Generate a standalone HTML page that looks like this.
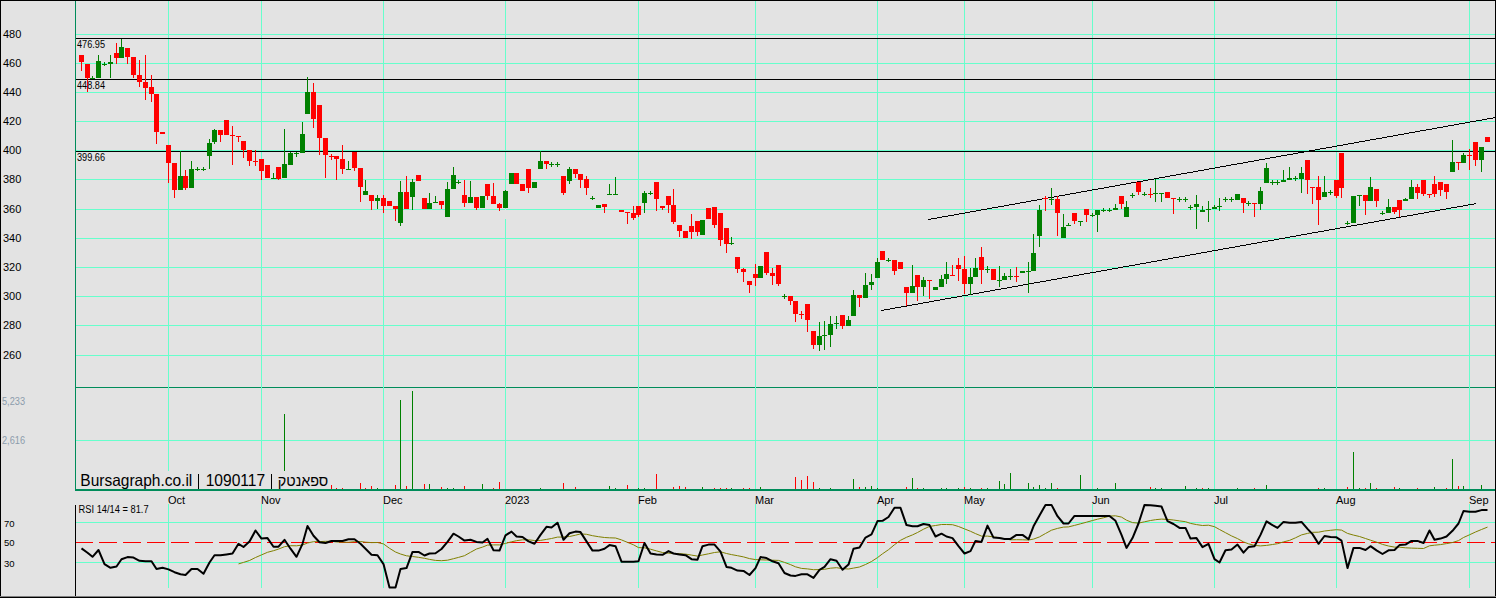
<!DOCTYPE html>
<html><head><meta charset="utf-8"><style>
html,body{margin:0;padding:0;background:#e3e3e3;overflow:hidden;}
svg{display:block;}
text{shape-rendering:auto;}
polyline,line{shape-rendering:auto;}
</style></head><body><svg width="1496" height="598" viewBox="0 0 1496 598" font-family='"Liberation Sans", sans-serif' shape-rendering="crispEdges"><rect x="0" y="0" width="1496" height="598" fill="#e3e3e3"/><rect x="75" y="387" width="1420" height="1" fill="#008c5a"/><rect x="168" y="1" width="1" height="489" fill="#66ffcc"/><rect x="168" y="504" width="1" height="84" fill="#66ffcc"/><rect x="261" y="1" width="1" height="489" fill="#66ffcc"/><rect x="261" y="504" width="1" height="84" fill="#66ffcc"/><rect x="383" y="1" width="1" height="489" fill="#66ffcc"/><rect x="383" y="504" width="1" height="84" fill="#66ffcc"/><rect x="505" y="1" width="1" height="208" fill="#66ffcc"/><rect x="505" y="219" width="1" height="271" fill="#66ffcc"/><rect x="505" y="504" width="1" height="84" fill="#66ffcc"/><rect x="638" y="1" width="1" height="489" fill="#66ffcc"/><rect x="638" y="504" width="1" height="84" fill="#66ffcc"/><rect x="755" y="1" width="1" height="489" fill="#66ffcc"/><rect x="755" y="504" width="1" height="84" fill="#66ffcc"/><rect x="877" y="1" width="1" height="489" fill="#66ffcc"/><rect x="877" y="504" width="1" height="84" fill="#66ffcc"/><rect x="964" y="1" width="1" height="489" fill="#66ffcc"/><rect x="964" y="504" width="1" height="84" fill="#66ffcc"/><rect x="1092" y="1" width="1" height="489" fill="#66ffcc"/><rect x="1092" y="504" width="1" height="84" fill="#66ffcc"/><rect x="1214" y="1" width="1" height="489" fill="#66ffcc"/><rect x="1214" y="504" width="1" height="84" fill="#66ffcc"/><rect x="1336" y="1" width="1" height="489" fill="#66ffcc"/><rect x="1336" y="504" width="1" height="84" fill="#66ffcc"/><rect x="1469" y="1" width="1" height="489" fill="#66ffcc"/><rect x="1469" y="504" width="1" height="84" fill="#66ffcc"/><rect x="76" y="34" width="1419" height="1" fill="#66ffcc"/><rect x="76" y="63" width="1419" height="1" fill="#66ffcc"/><rect x="76" y="92" width="1419" height="1" fill="#66ffcc"/><rect x="76" y="121" width="1419" height="1" fill="#66ffcc"/><rect x="76" y="150" width="1419" height="1" fill="#66ffcc"/><rect x="76" y="179" width="1419" height="1" fill="#66ffcc"/><rect x="76" y="209" width="429" height="1" fill="#66ffcc"/><rect x="506" y="209" width="989" height="1" fill="#66ffcc"/><rect x="76" y="238" width="1419" height="1" fill="#66ffcc"/><rect x="76" y="267" width="1419" height="1" fill="#66ffcc"/><rect x="76" y="296" width="1419" height="1" fill="#66ffcc"/><rect x="76" y="325" width="1419" height="1" fill="#66ffcc"/><rect x="76" y="355" width="1419" height="1" fill="#66ffcc"/><rect x="76" y="440" width="1419" height="1" fill="#66ffcc"/><rect x="76" y="522" width="1419" height="1" fill="#66ffcc"/><rect x="76" y="562" width="1419" height="1" fill="#66ffcc"/><rect x="75" y="542" width="18" height="1" fill="#ff0000"/><rect x="99" y="542" width="18" height="1" fill="#ff0000"/><rect x="123" y="542" width="18" height="1" fill="#ff0000"/><rect x="147" y="542" width="18" height="1" fill="#ff0000"/><rect x="171" y="542" width="18" height="1" fill="#ff0000"/><rect x="195" y="542" width="18" height="1" fill="#ff0000"/><rect x="219" y="542" width="18" height="1" fill="#ff0000"/><rect x="243" y="542" width="18" height="1" fill="#ff0000"/><rect x="267" y="542" width="18" height="1" fill="#ff0000"/><rect x="291" y="542" width="18" height="1" fill="#ff0000"/><rect x="315" y="542" width="18" height="1" fill="#ff0000"/><rect x="339" y="542" width="18" height="1" fill="#ff0000"/><rect x="363" y="542" width="18" height="1" fill="#ff0000"/><rect x="387" y="542" width="18" height="1" fill="#ff0000"/><rect x="411" y="542" width="18" height="1" fill="#ff0000"/><rect x="435" y="542" width="18" height="1" fill="#ff0000"/><rect x="459" y="542" width="18" height="1" fill="#ff0000"/><rect x="483" y="542" width="18" height="1" fill="#ff0000"/><rect x="507" y="542" width="18" height="1" fill="#ff0000"/><rect x="531" y="542" width="18" height="1" fill="#ff0000"/><rect x="555" y="542" width="18" height="1" fill="#ff0000"/><rect x="579" y="542" width="18" height="1" fill="#ff0000"/><rect x="603" y="542" width="18" height="1" fill="#ff0000"/><rect x="627" y="542" width="18" height="1" fill="#ff0000"/><rect x="651" y="542" width="18" height="1" fill="#ff0000"/><rect x="675" y="542" width="18" height="1" fill="#ff0000"/><rect x="699" y="542" width="18" height="1" fill="#ff0000"/><rect x="723" y="542" width="18" height="1" fill="#ff0000"/><rect x="747" y="542" width="18" height="1" fill="#ff0000"/><rect x="771" y="542" width="18" height="1" fill="#ff0000"/><rect x="795" y="542" width="18" height="1" fill="#ff0000"/><rect x="819" y="542" width="18" height="1" fill="#ff0000"/><rect x="843" y="542" width="18" height="1" fill="#ff0000"/><rect x="867" y="542" width="18" height="1" fill="#ff0000"/><rect x="891" y="542" width="18" height="1" fill="#ff0000"/><rect x="915" y="542" width="18" height="1" fill="#ff0000"/><rect x="939" y="542" width="18" height="1" fill="#ff0000"/><rect x="963" y="542" width="18" height="1" fill="#ff0000"/><rect x="987" y="542" width="18" height="1" fill="#ff0000"/><rect x="1011" y="542" width="18" height="1" fill="#ff0000"/><rect x="1035" y="542" width="18" height="1" fill="#ff0000"/><rect x="1059" y="542" width="18" height="1" fill="#ff0000"/><rect x="1083" y="542" width="18" height="1" fill="#ff0000"/><rect x="1107" y="542" width="18" height="1" fill="#ff0000"/><rect x="1131" y="542" width="18" height="1" fill="#ff0000"/><rect x="1155" y="542" width="18" height="1" fill="#ff0000"/><rect x="1179" y="542" width="18" height="1" fill="#ff0000"/><rect x="1203" y="542" width="18" height="1" fill="#ff0000"/><rect x="1227" y="542" width="18" height="1" fill="#ff0000"/><rect x="1251" y="542" width="18" height="1" fill="#ff0000"/><rect x="1275" y="542" width="18" height="1" fill="#ff0000"/><rect x="1299" y="542" width="18" height="1" fill="#ff0000"/><rect x="1323" y="542" width="18" height="1" fill="#ff0000"/><rect x="1347" y="542" width="18" height="1" fill="#ff0000"/><rect x="1371" y="542" width="18" height="1" fill="#ff0000"/><rect x="1395" y="542" width="18" height="1" fill="#ff0000"/><rect x="1419" y="542" width="18" height="1" fill="#ff0000"/><rect x="1443" y="542" width="18" height="1" fill="#ff0000"/><rect x="1467" y="542" width="18" height="1" fill="#ff0000"/><rect x="1491" y="542" width="4" height="1" fill="#ff0000"/><rect x="76" y="38" width="1419" height="1" fill="#000"/><rect x="76" y="79" width="1419" height="1" fill="#000"/><rect x="76" y="151" width="1419" height="1" fill="#000"/><rect x="928" y="219" width="3" height="1" fill="#000"/><rect x="931" y="218" width="6" height="1" fill="#000"/><rect x="937" y="217" width="5" height="1" fill="#000"/><rect x="942" y="216" width="6" height="1" fill="#000"/><rect x="948" y="215" width="6" height="1" fill="#000"/><rect x="954" y="214" width="5" height="1" fill="#000"/><rect x="959" y="213" width="6" height="1" fill="#000"/><rect x="965" y="212" width="5" height="1" fill="#000"/><rect x="970" y="211" width="6" height="1" fill="#000"/><rect x="976" y="210" width="5" height="1" fill="#000"/><rect x="981" y="209" width="6" height="1" fill="#000"/><rect x="987" y="208" width="5" height="1" fill="#000"/><rect x="992" y="207" width="6" height="1" fill="#000"/><rect x="998" y="206" width="6" height="1" fill="#000"/><rect x="1004" y="205" width="5" height="1" fill="#000"/><rect x="1009" y="204" width="6" height="1" fill="#000"/><rect x="1015" y="203" width="5" height="1" fill="#000"/><rect x="1020" y="202" width="6" height="1" fill="#000"/><rect x="1026" y="201" width="5" height="1" fill="#000"/><rect x="1031" y="200" width="6" height="1" fill="#000"/><rect x="1037" y="199" width="5" height="1" fill="#000"/><rect x="1042" y="198" width="6" height="1" fill="#000"/><rect x="1048" y="197" width="6" height="1" fill="#000"/><rect x="1054" y="196" width="5" height="1" fill="#000"/><rect x="1059" y="195" width="6" height="1" fill="#000"/><rect x="1065" y="194" width="5" height="1" fill="#000"/><rect x="1070" y="193" width="6" height="1" fill="#000"/><rect x="1076" y="192" width="5" height="1" fill="#000"/><rect x="1081" y="191" width="6" height="1" fill="#000"/><rect x="1087" y="190" width="5" height="1" fill="#000"/><rect x="1092" y="189" width="6" height="1" fill="#000"/><rect x="1098" y="188" width="6" height="1" fill="#000"/><rect x="1104" y="187" width="5" height="1" fill="#000"/><rect x="1109" y="186" width="6" height="1" fill="#000"/><rect x="1115" y="185" width="5" height="1" fill="#000"/><rect x="1120" y="184" width="6" height="1" fill="#000"/><rect x="1126" y="183" width="5" height="1" fill="#000"/><rect x="1131" y="182" width="6" height="1" fill="#000"/><rect x="1137" y="181" width="6" height="1" fill="#000"/><rect x="1143" y="180" width="5" height="1" fill="#000"/><rect x="1148" y="179" width="6" height="1" fill="#000"/><rect x="1154" y="178" width="5" height="1" fill="#000"/><rect x="1159" y="177" width="6" height="1" fill="#000"/><rect x="1165" y="176" width="5" height="1" fill="#000"/><rect x="1170" y="175" width="6" height="1" fill="#000"/><rect x="1176" y="174" width="5" height="1" fill="#000"/><rect x="1181" y="173" width="6" height="1" fill="#000"/><rect x="1187" y="172" width="6" height="1" fill="#000"/><rect x="1193" y="171" width="5" height="1" fill="#000"/><rect x="1198" y="170" width="6" height="1" fill="#000"/><rect x="1204" y="169" width="5" height="1" fill="#000"/><rect x="1209" y="168" width="6" height="1" fill="#000"/><rect x="1215" y="167" width="5" height="1" fill="#000"/><rect x="1220" y="166" width="6" height="1" fill="#000"/><rect x="1226" y="165" width="5" height="1" fill="#000"/><rect x="1231" y="164" width="6" height="1" fill="#000"/><rect x="1237" y="163" width="6" height="1" fill="#000"/><rect x="1243" y="162" width="5" height="1" fill="#000"/><rect x="1248" y="161" width="6" height="1" fill="#000"/><rect x="1254" y="160" width="5" height="1" fill="#000"/><rect x="1259" y="159" width="6" height="1" fill="#000"/><rect x="1265" y="158" width="5" height="1" fill="#000"/><rect x="1270" y="157" width="6" height="1" fill="#000"/><rect x="1276" y="156" width="5" height="1" fill="#000"/><rect x="1281" y="155" width="6" height="1" fill="#000"/><rect x="1287" y="154" width="6" height="1" fill="#000"/><rect x="1293" y="153" width="5" height="1" fill="#000"/><rect x="1298" y="152" width="6" height="1" fill="#000"/><rect x="1304" y="151" width="5" height="1" fill="#000"/><rect x="1309" y="150" width="6" height="1" fill="#000"/><rect x="1315" y="149" width="5" height="1" fill="#000"/><rect x="1320" y="148" width="6" height="1" fill="#000"/><rect x="1326" y="147" width="6" height="1" fill="#000"/><rect x="1332" y="146" width="5" height="1" fill="#000"/><rect x="1337" y="145" width="6" height="1" fill="#000"/><rect x="1343" y="144" width="5" height="1" fill="#000"/><rect x="1348" y="143" width="6" height="1" fill="#000"/><rect x="1354" y="142" width="5" height="1" fill="#000"/><rect x="1359" y="141" width="6" height="1" fill="#000"/><rect x="1365" y="140" width="5" height="1" fill="#000"/><rect x="1370" y="139" width="6" height="1" fill="#000"/><rect x="1376" y="138" width="6" height="1" fill="#000"/><rect x="1382" y="137" width="5" height="1" fill="#000"/><rect x="1387" y="136" width="6" height="1" fill="#000"/><rect x="1393" y="135" width="5" height="1" fill="#000"/><rect x="1398" y="134" width="6" height="1" fill="#000"/><rect x="1404" y="133" width="5" height="1" fill="#000"/><rect x="1409" y="132" width="6" height="1" fill="#000"/><rect x="1415" y="131" width="5" height="1" fill="#000"/><rect x="1420" y="130" width="6" height="1" fill="#000"/><rect x="1426" y="129" width="6" height="1" fill="#000"/><rect x="1432" y="128" width="5" height="1" fill="#000"/><rect x="1437" y="127" width="6" height="1" fill="#000"/><rect x="1443" y="126" width="5" height="1" fill="#000"/><rect x="1448" y="125" width="6" height="1" fill="#000"/><rect x="1454" y="124" width="5" height="1" fill="#000"/><rect x="1459" y="123" width="6" height="1" fill="#000"/><rect x="1465" y="122" width="5" height="1" fill="#000"/><rect x="1470" y="121" width="6" height="1" fill="#000"/><rect x="1476" y="120" width="6" height="1" fill="#000"/><rect x="1482" y="119" width="5" height="1" fill="#000"/><rect x="1487" y="118" width="6" height="1" fill="#000"/><rect x="1493" y="117" width="2" height="1" fill="#000"/><rect x="881" y="310" width="3" height="1" fill="#000"/><rect x="884" y="309" width="6" height="1" fill="#000"/><rect x="890" y="308" width="5" height="1" fill="#000"/><rect x="895" y="307" width="6" height="1" fill="#000"/><rect x="901" y="306" width="6" height="1" fill="#000"/><rect x="907" y="305" width="5" height="1" fill="#000"/><rect x="912" y="304" width="6" height="1" fill="#000"/><rect x="918" y="303" width="5" height="1" fill="#000"/><rect x="923" y="302" width="6" height="1" fill="#000"/><rect x="929" y="301" width="5" height="1" fill="#000"/><rect x="934" y="300" width="6" height="1" fill="#000"/><rect x="940" y="299" width="5" height="1" fill="#000"/><rect x="945" y="298" width="6" height="1" fill="#000"/><rect x="951" y="297" width="6" height="1" fill="#000"/><rect x="957" y="296" width="5" height="1" fill="#000"/><rect x="962" y="295" width="6" height="1" fill="#000"/><rect x="968" y="294" width="5" height="1" fill="#000"/><rect x="973" y="293" width="6" height="1" fill="#000"/><rect x="979" y="292" width="5" height="1" fill="#000"/><rect x="984" y="291" width="6" height="1" fill="#000"/><rect x="990" y="290" width="5" height="1" fill="#000"/><rect x="995" y="289" width="6" height="1" fill="#000"/><rect x="1001" y="288" width="6" height="1" fill="#000"/><rect x="1007" y="287" width="5" height="1" fill="#000"/><rect x="1012" y="286" width="6" height="1" fill="#000"/><rect x="1018" y="285" width="5" height="1" fill="#000"/><rect x="1023" y="284" width="6" height="1" fill="#000"/><rect x="1029" y="283" width="5" height="1" fill="#000"/><rect x="1034" y="282" width="6" height="1" fill="#000"/><rect x="1040" y="281" width="6" height="1" fill="#000"/><rect x="1046" y="280" width="5" height="1" fill="#000"/><rect x="1051" y="279" width="6" height="1" fill="#000"/><rect x="1057" y="278" width="5" height="1" fill="#000"/><rect x="1062" y="277" width="6" height="1" fill="#000"/><rect x="1068" y="276" width="5" height="1" fill="#000"/><rect x="1073" y="275" width="6" height="1" fill="#000"/><rect x="1079" y="274" width="5" height="1" fill="#000"/><rect x="1084" y="273" width="6" height="1" fill="#000"/><rect x="1090" y="272" width="6" height="1" fill="#000"/><rect x="1096" y="271" width="5" height="1" fill="#000"/><rect x="1101" y="270" width="6" height="1" fill="#000"/><rect x="1107" y="269" width="5" height="1" fill="#000"/><rect x="1112" y="268" width="6" height="1" fill="#000"/><rect x="1118" y="267" width="5" height="1" fill="#000"/><rect x="1123" y="266" width="6" height="1" fill="#000"/><rect x="1129" y="265" width="6" height="1" fill="#000"/><rect x="1135" y="264" width="5" height="1" fill="#000"/><rect x="1140" y="263" width="6" height="1" fill="#000"/><rect x="1146" y="262" width="5" height="1" fill="#000"/><rect x="1151" y="261" width="6" height="1" fill="#000"/><rect x="1157" y="260" width="5" height="1" fill="#000"/><rect x="1162" y="259" width="6" height="1" fill="#000"/><rect x="1168" y="258" width="5" height="1" fill="#000"/><rect x="1173" y="257" width="6" height="1" fill="#000"/><rect x="1179" y="256" width="6" height="1" fill="#000"/><rect x="1185" y="255" width="5" height="1" fill="#000"/><rect x="1190" y="254" width="6" height="1" fill="#000"/><rect x="1196" y="253" width="5" height="1" fill="#000"/><rect x="1201" y="252" width="6" height="1" fill="#000"/><rect x="1207" y="251" width="5" height="1" fill="#000"/><rect x="1212" y="250" width="6" height="1" fill="#000"/><rect x="1218" y="249" width="5" height="1" fill="#000"/><rect x="1223" y="248" width="6" height="1" fill="#000"/><rect x="1229" y="247" width="6" height="1" fill="#000"/><rect x="1235" y="246" width="5" height="1" fill="#000"/><rect x="1240" y="245" width="6" height="1" fill="#000"/><rect x="1246" y="244" width="5" height="1" fill="#000"/><rect x="1251" y="243" width="6" height="1" fill="#000"/><rect x="1257" y="242" width="5" height="1" fill="#000"/><rect x="1262" y="241" width="6" height="1" fill="#000"/><rect x="1268" y="240" width="6" height="1" fill="#000"/><rect x="1274" y="239" width="5" height="1" fill="#000"/><rect x="1279" y="238" width="6" height="1" fill="#000"/><rect x="1285" y="237" width="5" height="1" fill="#000"/><rect x="1290" y="236" width="6" height="1" fill="#000"/><rect x="1296" y="235" width="5" height="1" fill="#000"/><rect x="1301" y="234" width="6" height="1" fill="#000"/><rect x="1307" y="233" width="5" height="1" fill="#000"/><rect x="1312" y="232" width="6" height="1" fill="#000"/><rect x="1318" y="231" width="6" height="1" fill="#000"/><rect x="1324" y="230" width="5" height="1" fill="#000"/><rect x="1329" y="229" width="6" height="1" fill="#000"/><rect x="1335" y="228" width="5" height="1" fill="#000"/><rect x="1340" y="227" width="6" height="1" fill="#000"/><rect x="1346" y="226" width="5" height="1" fill="#000"/><rect x="1351" y="225" width="6" height="1" fill="#000"/><rect x="1357" y="224" width="6" height="1" fill="#000"/><rect x="1363" y="223" width="5" height="1" fill="#000"/><rect x="1368" y="222" width="6" height="1" fill="#000"/><rect x="1374" y="221" width="5" height="1" fill="#000"/><rect x="1379" y="220" width="6" height="1" fill="#000"/><rect x="1385" y="219" width="5" height="1" fill="#000"/><rect x="1390" y="218" width="6" height="1" fill="#000"/><rect x="1396" y="217" width="5" height="1" fill="#000"/><rect x="1401" y="216" width="6" height="1" fill="#000"/><rect x="1407" y="215" width="6" height="1" fill="#000"/><rect x="1413" y="214" width="5" height="1" fill="#000"/><rect x="1418" y="213" width="6" height="1" fill="#000"/><rect x="1424" y="212" width="5" height="1" fill="#000"/><rect x="1429" y="211" width="6" height="1" fill="#000"/><rect x="1435" y="210" width="5" height="1" fill="#000"/><rect x="1440" y="209" width="6" height="1" fill="#000"/><rect x="1446" y="208" width="5" height="1" fill="#000"/><rect x="1451" y="207" width="6" height="1" fill="#000"/><rect x="1457" y="206" width="6" height="1" fill="#000"/><rect x="1463" y="205" width="5" height="1" fill="#000"/><rect x="1468" y="204" width="6" height="1" fill="#000"/><rect x="1474" y="203" width="2" height="1" fill="#000"/><rect x="81" y="55" width="1" height="16" fill="#ff0000"/><rect x="79" y="55" width="5" height="7" fill="#ff0000"/><rect x="87" y="64" width="1" height="28" fill="#ff0000"/><rect x="85" y="64" width="5" height="14" fill="#ff0000"/><rect x="92" y="76" width="1" height="3" fill="#008000"/><rect x="90" y="78" width="5" height="1" fill="#008000"/><rect x="98" y="55" width="1" height="23" fill="#008000"/><rect x="96" y="61" width="5" height="17" fill="#008000"/><rect x="104" y="62" width="1" height="4" fill="#008000"/><rect x="102" y="64" width="5" height="1" fill="#008000"/><rect x="110" y="55" width="1" height="23" fill="#008000"/><rect x="108" y="62" width="5" height="2" fill="#008000"/><rect x="116" y="43" width="1" height="21" fill="#ff0000"/><rect x="114" y="53" width="5" height="5" fill="#ff0000"/><rect x="121" y="39" width="1" height="19" fill="#008000"/><rect x="119" y="47" width="5" height="11" fill="#008000"/><rect x="127" y="48" width="1" height="16" fill="#ff0000"/><rect x="125" y="48" width="5" height="9" fill="#ff0000"/><rect x="133" y="57" width="1" height="21" fill="#ff0000"/><rect x="131" y="57" width="5" height="18" fill="#ff0000"/><rect x="139" y="60" width="1" height="27" fill="#ff0000"/><rect x="137" y="75" width="5" height="7" fill="#ff0000"/><rect x="145" y="55" width="1" height="45" fill="#ff0000"/><rect x="143" y="82" width="5" height="6" fill="#ff0000"/><rect x="151" y="75" width="1" height="27" fill="#ff0000"/><rect x="149" y="87" width="5" height="7" fill="#ff0000"/><rect x="156" y="94" width="1" height="50" fill="#ff0000"/><rect x="154" y="94" width="5" height="38" fill="#ff0000"/><rect x="162" y="132" width="1" height="2" fill="#ff0000"/><rect x="160" y="132" width="5" height="2" fill="#ff0000"/><rect x="168" y="145" width="1" height="38" fill="#ff0000"/><rect x="166" y="145" width="5" height="18" fill="#ff0000"/><rect x="174" y="163" width="1" height="35" fill="#ff0000"/><rect x="172" y="163" width="5" height="27" fill="#ff0000"/><rect x="180" y="151" width="1" height="39" fill="#008000"/><rect x="178" y="176" width="5" height="14" fill="#008000"/><rect x="185" y="170" width="1" height="20" fill="#ff0000"/><rect x="183" y="176" width="5" height="12" fill="#ff0000"/><rect x="191" y="161" width="1" height="27" fill="#008000"/><rect x="189" y="169" width="5" height="19" fill="#008000"/><rect x="197" y="167" width="1" height="4" fill="#008000"/><rect x="195" y="169" width="5" height="1" fill="#008000"/><rect x="203" y="167" width="1" height="4" fill="#008000"/><rect x="201" y="169" width="5" height="1" fill="#008000"/><rect x="209" y="139" width="1" height="30" fill="#008000"/><rect x="207" y="143" width="5" height="13" fill="#008000"/><rect x="214" y="129" width="1" height="15" fill="#008000"/><rect x="212" y="130" width="5" height="12" fill="#008000"/><rect x="220" y="130" width="1" height="12" fill="#ff0000"/><rect x="218" y="130" width="5" height="5" fill="#ff0000"/><rect x="226" y="120" width="1" height="15" fill="#ff0000"/><rect x="224" y="120" width="5" height="15" fill="#ff0000"/><rect x="232" y="126" width="1" height="39" fill="#ff0000"/><rect x="230" y="135" width="5" height="1" fill="#ff0000"/><rect x="238" y="136" width="1" height="6" fill="#ff0000"/><rect x="236" y="136" width="5" height="1" fill="#ff0000"/><rect x="243" y="141" width="1" height="17" fill="#ff0000"/><rect x="241" y="141" width="5" height="9" fill="#ff0000"/><rect x="249" y="150" width="1" height="16" fill="#ff0000"/><rect x="247" y="150" width="5" height="11" fill="#ff0000"/><rect x="255" y="150" width="1" height="16" fill="#ff0000"/><rect x="253" y="161" width="5" height="1" fill="#ff0000"/><rect x="261" y="159" width="1" height="21" fill="#ff0000"/><rect x="259" y="159" width="5" height="12" fill="#ff0000"/><rect x="267" y="165" width="1" height="13" fill="#ff0000"/><rect x="265" y="165" width="5" height="13" fill="#ff0000"/><rect x="273" y="173" width="1" height="6" fill="#008000"/><rect x="271" y="178" width="5" height="1" fill="#008000"/><rect x="278" y="167" width="1" height="13" fill="#ff0000"/><rect x="276" y="167" width="5" height="12" fill="#ff0000"/><rect x="284" y="129" width="1" height="49" fill="#008000"/><rect x="282" y="164" width="5" height="14" fill="#008000"/><rect x="290" y="152" width="1" height="13" fill="#008000"/><rect x="288" y="153" width="5" height="12" fill="#008000"/><rect x="296" y="152" width="1" height="5" fill="#008000"/><rect x="294" y="153" width="5" height="1" fill="#008000"/><rect x="302" y="122" width="1" height="31" fill="#008000"/><rect x="300" y="134" width="5" height="19" fill="#008000"/><rect x="307" y="77" width="1" height="37" fill="#008000"/><rect x="305" y="92" width="5" height="22" fill="#008000"/><rect x="313" y="83" width="1" height="45" fill="#ff0000"/><rect x="311" y="92" width="5" height="27" fill="#ff0000"/><rect x="319" y="105" width="1" height="50" fill="#ff0000"/><rect x="317" y="105" width="5" height="33" fill="#ff0000"/><rect x="325" y="138" width="1" height="40" fill="#ff0000"/><rect x="323" y="138" width="5" height="17" fill="#ff0000"/><rect x="331" y="154" width="1" height="6" fill="#ff0000"/><rect x="329" y="156" width="5" height="1" fill="#ff0000"/><rect x="336" y="156" width="1" height="24" fill="#ff0000"/><rect x="334" y="156" width="5" height="3" fill="#ff0000"/><rect x="342" y="145" width="1" height="29" fill="#ff0000"/><rect x="340" y="159" width="5" height="10" fill="#ff0000"/><rect x="348" y="161" width="1" height="9" fill="#008000"/><rect x="346" y="169" width="5" height="1" fill="#008000"/><rect x="354" y="152" width="1" height="19" fill="#ff0000"/><rect x="352" y="152" width="5" height="16" fill="#ff0000"/><rect x="360" y="168" width="1" height="34" fill="#ff0000"/><rect x="358" y="168" width="5" height="19" fill="#ff0000"/><rect x="365" y="180" width="1" height="15" fill="#008000"/><rect x="363" y="191" width="5" height="4" fill="#008000"/><rect x="371" y="195" width="1" height="15" fill="#ff0000"/><rect x="369" y="195" width="5" height="6" fill="#ff0000"/><rect x="377" y="195" width="1" height="14" fill="#008000"/><rect x="375" y="198" width="5" height="3" fill="#008000"/><rect x="383" y="195" width="1" height="18" fill="#ff0000"/><rect x="381" y="198" width="5" height="8" fill="#ff0000"/><rect x="389" y="201" width="1" height="5" fill="#ff0000"/><rect x="387" y="201" width="5" height="5" fill="#ff0000"/><rect x="395" y="206" width="1" height="15" fill="#ff0000"/><rect x="393" y="206" width="5" height="3" fill="#ff0000"/><rect x="400" y="181" width="1" height="45" fill="#008000"/><rect x="398" y="192" width="5" height="31" fill="#008000"/><rect x="406" y="176" width="1" height="33" fill="#ff0000"/><rect x="404" y="192" width="5" height="17" fill="#ff0000"/><rect x="412" y="179" width="1" height="31" fill="#008000"/><rect x="410" y="182" width="5" height="15" fill="#008000"/><rect x="418" y="175" width="1" height="6" fill="#ff0000"/><rect x="416" y="175" width="5" height="6" fill="#ff0000"/><rect x="424" y="198" width="1" height="11" fill="#ff0000"/><rect x="422" y="198" width="5" height="11" fill="#ff0000"/><rect x="429" y="193" width="1" height="16" fill="#008000"/><rect x="427" y="203" width="5" height="6" fill="#008000"/><rect x="435" y="196" width="1" height="7" fill="#008000"/><rect x="433" y="202" width="5" height="1" fill="#008000"/><rect x="441" y="201" width="1" height="8" fill="#ff0000"/><rect x="439" y="201" width="5" height="4" fill="#ff0000"/><rect x="447" y="182" width="1" height="35" fill="#008000"/><rect x="445" y="189" width="5" height="28" fill="#008000"/><rect x="453" y="167" width="1" height="22" fill="#008000"/><rect x="451" y="175" width="5" height="14" fill="#008000"/><rect x="458" y="180" width="1" height="4" fill="#008000"/><rect x="456" y="182" width="5" height="1" fill="#008000"/><rect x="464" y="180" width="1" height="27" fill="#ff0000"/><rect x="462" y="195" width="5" height="8" fill="#ff0000"/><rect x="470" y="181" width="1" height="22" fill="#008000"/><rect x="468" y="197" width="5" height="6" fill="#008000"/><rect x="476" y="197" width="1" height="13" fill="#ff0000"/><rect x="474" y="197" width="5" height="11" fill="#ff0000"/><rect x="482" y="196" width="1" height="12" fill="#008000"/><rect x="480" y="196" width="5" height="12" fill="#008000"/><rect x="487" y="184" width="1" height="16" fill="#ff0000"/><rect x="485" y="184" width="5" height="12" fill="#ff0000"/><rect x="493" y="183" width="1" height="21" fill="#ff0000"/><rect x="491" y="196" width="5" height="8" fill="#ff0000"/><rect x="499" y="203" width="1" height="8" fill="#ff0000"/><rect x="497" y="204" width="5" height="4" fill="#ff0000"/><rect x="505" y="190" width="1" height="18" fill="#008000"/><rect x="503" y="191" width="5" height="17" fill="#008000"/><rect x="511" y="173" width="1" height="11" fill="#008000"/><rect x="509" y="173" width="5" height="11" fill="#008000"/><rect x="516" y="173" width="1" height="11" fill="#ff0000"/><rect x="514" y="173" width="5" height="11" fill="#ff0000"/><rect x="522" y="184" width="1" height="7" fill="#ff0000"/><rect x="520" y="184" width="5" height="7" fill="#ff0000"/><rect x="528" y="169" width="1" height="24" fill="#ff0000"/><rect x="526" y="169" width="5" height="19" fill="#ff0000"/><rect x="534" y="182" width="1" height="6" fill="#008000"/><rect x="532" y="182" width="5" height="6" fill="#008000"/><rect x="540" y="151" width="1" height="18" fill="#008000"/><rect x="538" y="161" width="5" height="8" fill="#008000"/><rect x="546" y="161" width="1" height="8" fill="#ff0000"/><rect x="544" y="161" width="5" height="3" fill="#ff0000"/><rect x="551" y="162" width="1" height="5" fill="#008000"/><rect x="549" y="164" width="5" height="1" fill="#008000"/><rect x="557" y="162" width="1" height="5" fill="#008000"/><rect x="555" y="164" width="5" height="1" fill="#008000"/><rect x="563" y="176" width="1" height="19" fill="#ff0000"/><rect x="561" y="176" width="5" height="17" fill="#ff0000"/><rect x="569" y="167" width="1" height="17" fill="#008000"/><rect x="567" y="169" width="5" height="12" fill="#008000"/><rect x="575" y="169" width="1" height="9" fill="#ff0000"/><rect x="573" y="169" width="5" height="5" fill="#ff0000"/><rect x="580" y="174" width="1" height="14" fill="#ff0000"/><rect x="578" y="174" width="5" height="6" fill="#ff0000"/><rect x="586" y="176" width="1" height="19" fill="#ff0000"/><rect x="584" y="179" width="5" height="9" fill="#ff0000"/><rect x="592" y="196" width="1" height="4" fill="#008000"/><rect x="590" y="198" width="5" height="1" fill="#008000"/><rect x="598" y="205" width="1" height="3" fill="#008000"/><rect x="596" y="205" width="5" height="3" fill="#008000"/><rect x="604" y="204" width="1" height="9" fill="#ff0000"/><rect x="602" y="204" width="5" height="3" fill="#ff0000"/><rect x="609" y="184" width="1" height="11" fill="#008000"/><rect x="607" y="194" width="5" height="1" fill="#008000"/><rect x="615" y="177" width="1" height="18" fill="#008000"/><rect x="613" y="194" width="5" height="1" fill="#008000"/><rect x="621" y="210" width="1" height="2" fill="#ff0000"/><rect x="619" y="210" width="5" height="2" fill="#ff0000"/><rect x="627" y="212" width="1" height="12" fill="#ff0000"/><rect x="625" y="212" width="5" height="1" fill="#ff0000"/><rect x="633" y="206" width="1" height="14" fill="#ff0000"/><rect x="631" y="213" width="5" height="5" fill="#ff0000"/><rect x="638" y="206" width="1" height="11" fill="#ff0000"/><rect x="636" y="206" width="5" height="9" fill="#ff0000"/><rect x="644" y="191" width="1" height="22" fill="#008000"/><rect x="642" y="193" width="5" height="10" fill="#008000"/><rect x="650" y="191" width="1" height="4" fill="#008000"/><rect x="648" y="193" width="5" height="1" fill="#008000"/><rect x="656" y="182" width="1" height="29" fill="#ff0000"/><rect x="654" y="182" width="5" height="17" fill="#ff0000"/><rect x="662" y="206" width="1" height="4" fill="#ff0000"/><rect x="660" y="206" width="5" height="2" fill="#ff0000"/><rect x="668" y="196" width="1" height="17" fill="#ff0000"/><rect x="666" y="196" width="5" height="9" fill="#ff0000"/><rect x="673" y="189" width="1" height="35" fill="#ff0000"/><rect x="671" y="205" width="5" height="17" fill="#ff0000"/><rect x="679" y="225" width="1" height="12" fill="#ff0000"/><rect x="677" y="225" width="5" height="6" fill="#ff0000"/><rect x="685" y="231" width="1" height="7" fill="#ff0000"/><rect x="683" y="231" width="5" height="7" fill="#ff0000"/><rect x="691" y="214" width="1" height="25" fill="#ff0000"/><rect x="689" y="226" width="5" height="6" fill="#ff0000"/><rect x="697" y="221" width="1" height="15" fill="#ff0000"/><rect x="695" y="221" width="5" height="11" fill="#ff0000"/><rect x="702" y="220" width="1" height="15" fill="#008000"/><rect x="700" y="220" width="5" height="15" fill="#008000"/><rect x="708" y="208" width="1" height="11" fill="#ff0000"/><rect x="706" y="208" width="5" height="11" fill="#ff0000"/><rect x="714" y="207" width="1" height="21" fill="#ff0000"/><rect x="712" y="207" width="5" height="18" fill="#ff0000"/><rect x="720" y="213" width="1" height="33" fill="#ff0000"/><rect x="718" y="213" width="5" height="27" fill="#ff0000"/><rect x="726" y="228" width="1" height="25" fill="#ff0000"/><rect x="724" y="228" width="5" height="16" fill="#ff0000"/><rect x="731" y="237" width="1" height="8" fill="#008000"/><rect x="729" y="243" width="5" height="1" fill="#008000"/><rect x="737" y="257" width="1" height="16" fill="#ff0000"/><rect x="735" y="257" width="5" height="12" fill="#ff0000"/><rect x="743" y="268" width="1" height="14" fill="#ff0000"/><rect x="741" y="269" width="5" height="3" fill="#ff0000"/><rect x="749" y="281" width="1" height="12" fill="#ff0000"/><rect x="747" y="281" width="5" height="4" fill="#ff0000"/><rect x="755" y="264" width="1" height="22" fill="#ff0000"/><rect x="753" y="274" width="5" height="4" fill="#ff0000"/><rect x="760" y="266" width="1" height="12" fill="#008000"/><rect x="758" y="266" width="5" height="12" fill="#008000"/><rect x="766" y="252" width="1" height="23" fill="#ff0000"/><rect x="764" y="252" width="5" height="21" fill="#ff0000"/><rect x="772" y="268" width="1" height="17" fill="#ff0000"/><rect x="770" y="273" width="5" height="3" fill="#ff0000"/><rect x="778" y="265" width="1" height="21" fill="#ff0000"/><rect x="776" y="265" width="5" height="19" fill="#ff0000"/><rect x="784" y="294" width="1" height="5" fill="#008000"/><rect x="782" y="296" width="5" height="1" fill="#008000"/><rect x="790" y="296" width="1" height="9" fill="#ff0000"/><rect x="788" y="296" width="5" height="5" fill="#ff0000"/><rect x="795" y="301" width="1" height="21" fill="#ff0000"/><rect x="793" y="301" width="5" height="13" fill="#ff0000"/><rect x="801" y="311" width="1" height="8" fill="#ff0000"/><rect x="799" y="314" width="5" height="1" fill="#ff0000"/><rect x="807" y="304" width="1" height="28" fill="#ff0000"/><rect x="805" y="304" width="5" height="16" fill="#ff0000"/><rect x="813" y="331" width="1" height="18" fill="#ff0000"/><rect x="811" y="331" width="5" height="14" fill="#ff0000"/><rect x="819" y="322" width="1" height="29" fill="#008000"/><rect x="817" y="336" width="5" height="9" fill="#008000"/><rect x="824" y="321" width="1" height="29" fill="#008000"/><rect x="822" y="335" width="5" height="1" fill="#008000"/><rect x="830" y="316" width="1" height="31" fill="#008000"/><rect x="828" y="324" width="5" height="11" fill="#008000"/><rect x="836" y="316" width="1" height="13" fill="#008000"/><rect x="834" y="323" width="5" height="1" fill="#008000"/><rect x="842" y="315" width="1" height="14" fill="#ff0000"/><rect x="840" y="315" width="5" height="11" fill="#ff0000"/><rect x="848" y="316" width="1" height="10" fill="#008000"/><rect x="846" y="320" width="5" height="6" fill="#008000"/><rect x="853" y="290" width="1" height="26" fill="#008000"/><rect x="851" y="295" width="5" height="21" fill="#008000"/><rect x="859" y="295" width="1" height="12" fill="#ff0000"/><rect x="857" y="295" width="5" height="3" fill="#ff0000"/><rect x="865" y="273" width="1" height="25" fill="#008000"/><rect x="863" y="285" width="5" height="13" fill="#008000"/><rect x="871" y="274" width="1" height="16" fill="#008000"/><rect x="869" y="282" width="5" height="3" fill="#008000"/><rect x="877" y="258" width="1" height="20" fill="#008000"/><rect x="875" y="262" width="5" height="16" fill="#008000"/><rect x="882" y="251" width="1" height="9" fill="#ff0000"/><rect x="880" y="251" width="5" height="9" fill="#ff0000"/><rect x="888" y="258" width="1" height="4" fill="#008000"/><rect x="886" y="260" width="5" height="1" fill="#008000"/><rect x="894" y="260" width="1" height="15" fill="#ff0000"/><rect x="892" y="260" width="5" height="11" fill="#ff0000"/><rect x="900" y="262" width="1" height="7" fill="#ff0000"/><rect x="898" y="262" width="5" height="7" fill="#ff0000"/><rect x="906" y="287" width="1" height="19" fill="#ff0000"/><rect x="904" y="287" width="5" height="6" fill="#ff0000"/><rect x="912" y="265" width="1" height="28" fill="#008000"/><rect x="910" y="286" width="5" height="7" fill="#008000"/><rect x="917" y="275" width="1" height="26" fill="#ff0000"/><rect x="915" y="275" width="5" height="12" fill="#ff0000"/><rect x="923" y="277" width="1" height="19" fill="#008000"/><rect x="921" y="280" width="5" height="7" fill="#008000"/><rect x="929" y="280" width="1" height="19" fill="#ff0000"/><rect x="927" y="280" width="5" height="1" fill="#ff0000"/><rect x="935" y="287" width="1" height="3" fill="#008000"/><rect x="933" y="287" width="5" height="3" fill="#008000"/><rect x="941" y="275" width="1" height="12" fill="#008000"/><rect x="939" y="279" width="5" height="8" fill="#008000"/><rect x="946" y="262" width="1" height="22" fill="#008000"/><rect x="944" y="274" width="5" height="5" fill="#008000"/><rect x="952" y="265" width="1" height="11" fill="#ff0000"/><rect x="950" y="275" width="5" height="1" fill="#ff0000"/><rect x="958" y="258" width="1" height="23" fill="#ff0000"/><rect x="956" y="265" width="5" height="4" fill="#ff0000"/><rect x="964" y="256" width="1" height="38" fill="#ff0000"/><rect x="962" y="269" width="5" height="15" fill="#ff0000"/><rect x="970" y="268" width="1" height="27" fill="#008000"/><rect x="968" y="277" width="5" height="7" fill="#008000"/><rect x="975" y="258" width="1" height="19" fill="#008000"/><rect x="973" y="268" width="5" height="9" fill="#008000"/><rect x="981" y="247" width="1" height="37" fill="#ff0000"/><rect x="979" y="257" width="5" height="13" fill="#ff0000"/><rect x="987" y="266" width="1" height="7" fill="#008000"/><rect x="985" y="269" width="5" height="1" fill="#008000"/><rect x="993" y="269" width="1" height="11" fill="#ff0000"/><rect x="991" y="269" width="5" height="11" fill="#ff0000"/><rect x="999" y="266" width="1" height="21" fill="#008000"/><rect x="997" y="280" width="5" height="1" fill="#008000"/><rect x="1004" y="273" width="1" height="7" fill="#008000"/><rect x="1002" y="276" width="5" height="4" fill="#008000"/><rect x="1010" y="269" width="1" height="11" fill="#008000"/><rect x="1008" y="276" width="5" height="1" fill="#008000"/><rect x="1016" y="267" width="1" height="15" fill="#ff0000"/><rect x="1014" y="276" width="5" height="1" fill="#ff0000"/><rect x="1022" y="271" width="1" height="2" fill="#008000"/><rect x="1020" y="271" width="5" height="2" fill="#008000"/><rect x="1028" y="262" width="1" height="31" fill="#008000"/><rect x="1026" y="271" width="5" height="1" fill="#008000"/><rect x="1033" y="234" width="1" height="37" fill="#008000"/><rect x="1031" y="253" width="5" height="18" fill="#008000"/><rect x="1039" y="205" width="1" height="42" fill="#008000"/><rect x="1037" y="210" width="5" height="26" fill="#008000"/><rect x="1045" y="196" width="1" height="15" fill="#ff0000"/><rect x="1043" y="198" width="5" height="1" fill="#ff0000"/><rect x="1051" y="188" width="1" height="17" fill="#008000"/><rect x="1049" y="199" width="5" height="1" fill="#008000"/><rect x="1057" y="196" width="1" height="40" fill="#ff0000"/><rect x="1055" y="199" width="5" height="14" fill="#ff0000"/><rect x="1063" y="214" width="1" height="24" fill="#008000"/><rect x="1061" y="227" width="5" height="11" fill="#008000"/><rect x="1068" y="223" width="1" height="3" fill="#008000"/><rect x="1066" y="225" width="5" height="1" fill="#008000"/><rect x="1074" y="213" width="1" height="11" fill="#ff0000"/><rect x="1072" y="213" width="5" height="8" fill="#ff0000"/><rect x="1080" y="221" width="1" height="5" fill="#008000"/><rect x="1078" y="221" width="5" height="1" fill="#008000"/><rect x="1086" y="209" width="1" height="13" fill="#ff0000"/><rect x="1084" y="209" width="5" height="6" fill="#ff0000"/><rect x="1092" y="213" width="1" height="4" fill="#008000"/><rect x="1090" y="215" width="5" height="1" fill="#008000"/><rect x="1097" y="210" width="1" height="22" fill="#008000"/><rect x="1095" y="210" width="5" height="5" fill="#008000"/><rect x="1103" y="208" width="1" height="4" fill="#008000"/><rect x="1101" y="210" width="5" height="1" fill="#008000"/><rect x="1109" y="208" width="1" height="4" fill="#008000"/><rect x="1107" y="210" width="5" height="1" fill="#008000"/><rect x="1115" y="204" width="1" height="6" fill="#008000"/><rect x="1113" y="208" width="5" height="2" fill="#008000"/><rect x="1121" y="196" width="1" height="13" fill="#ff0000"/><rect x="1119" y="196" width="5" height="8" fill="#ff0000"/><rect x="1126" y="201" width="1" height="16" fill="#008000"/><rect x="1124" y="207" width="5" height="10" fill="#008000"/><rect x="1132" y="193" width="1" height="5" fill="#008000"/><rect x="1130" y="195" width="5" height="1" fill="#008000"/><rect x="1138" y="182" width="1" height="13" fill="#ff0000"/><rect x="1136" y="182" width="5" height="10" fill="#ff0000"/><rect x="1144" y="192" width="1" height="4" fill="#008000"/><rect x="1142" y="194" width="5" height="1" fill="#008000"/><rect x="1150" y="188" width="1" height="10" fill="#ff0000"/><rect x="1148" y="194" width="5" height="1" fill="#ff0000"/><rect x="1155" y="179" width="1" height="23" fill="#008000"/><rect x="1153" y="193" width="5" height="1" fill="#008000"/><rect x="1161" y="193" width="1" height="9" fill="#008000"/><rect x="1159" y="193" width="5" height="1" fill="#008000"/><rect x="1167" y="192" width="1" height="6" fill="#ff0000"/><rect x="1165" y="192" width="5" height="6" fill="#ff0000"/><rect x="1173" y="198" width="1" height="16" fill="#ff0000"/><rect x="1171" y="198" width="5" height="1" fill="#ff0000"/><rect x="1179" y="197" width="1" height="5" fill="#008000"/><rect x="1177" y="199" width="5" height="1" fill="#008000"/><rect x="1185" y="197" width="1" height="5" fill="#008000"/><rect x="1183" y="199" width="5" height="1" fill="#008000"/><rect x="1190" y="205" width="1" height="5" fill="#008000"/><rect x="1188" y="207" width="5" height="1" fill="#008000"/><rect x="1196" y="195" width="1" height="34" fill="#008000"/><rect x="1194" y="204" width="5" height="3" fill="#008000"/><rect x="1202" y="206" width="1" height="6" fill="#008000"/><rect x="1200" y="210" width="5" height="2" fill="#008000"/><rect x="1208" y="201" width="1" height="21" fill="#008000"/><rect x="1206" y="209" width="5" height="1" fill="#008000"/><rect x="1214" y="205" width="1" height="4" fill="#008000"/><rect x="1212" y="207" width="5" height="2" fill="#008000"/><rect x="1219" y="198" width="1" height="13" fill="#008000"/><rect x="1217" y="206" width="5" height="1" fill="#008000"/><rect x="1225" y="197" width="1" height="5" fill="#008000"/><rect x="1223" y="199" width="5" height="1" fill="#008000"/><rect x="1231" y="197" width="1" height="5" fill="#008000"/><rect x="1229" y="199" width="5" height="1" fill="#008000"/><rect x="1237" y="194" width="1" height="6" fill="#008000"/><rect x="1235" y="194" width="5" height="6" fill="#008000"/><rect x="1243" y="198" width="1" height="15" fill="#ff0000"/><rect x="1241" y="198" width="5" height="5" fill="#ff0000"/><rect x="1248" y="201" width="1" height="5" fill="#008000"/><rect x="1246" y="203" width="5" height="1" fill="#008000"/><rect x="1254" y="203" width="1" height="14" fill="#ff0000"/><rect x="1252" y="203" width="5" height="1" fill="#ff0000"/><rect x="1260" y="187" width="1" height="23" fill="#008000"/><rect x="1258" y="191" width="5" height="13" fill="#008000"/><rect x="1266" y="163" width="1" height="20" fill="#008000"/><rect x="1264" y="168" width="5" height="15" fill="#008000"/><rect x="1272" y="180" width="1" height="5" fill="#008000"/><rect x="1270" y="182" width="5" height="1" fill="#008000"/><rect x="1277" y="180" width="1" height="5" fill="#008000"/><rect x="1275" y="182" width="5" height="1" fill="#008000"/><rect x="1283" y="170" width="1" height="12" fill="#008000"/><rect x="1281" y="180" width="5" height="2" fill="#008000"/><rect x="1289" y="167" width="1" height="13" fill="#008000"/><rect x="1287" y="178" width="5" height="2" fill="#008000"/><rect x="1295" y="176" width="1" height="5" fill="#008000"/><rect x="1293" y="178" width="5" height="1" fill="#008000"/><rect x="1301" y="167" width="1" height="26" fill="#008000"/><rect x="1299" y="173" width="5" height="6" fill="#008000"/><rect x="1307" y="160" width="1" height="34" fill="#ff0000"/><rect x="1305" y="160" width="5" height="20" fill="#ff0000"/><rect x="1312" y="187" width="1" height="17" fill="#ff0000"/><rect x="1310" y="187" width="5" height="1" fill="#ff0000"/><rect x="1318" y="176" width="1" height="49" fill="#ff0000"/><rect x="1316" y="187" width="5" height="13" fill="#ff0000"/><rect x="1324" y="176" width="1" height="21" fill="#008000"/><rect x="1322" y="192" width="5" height="5" fill="#008000"/><rect x="1330" y="190" width="1" height="5" fill="#008000"/><rect x="1328" y="192" width="5" height="1" fill="#008000"/><rect x="1336" y="180" width="1" height="18" fill="#ff0000"/><rect x="1334" y="180" width="5" height="16" fill="#ff0000"/><rect x="1341" y="153" width="1" height="45" fill="#ff0000"/><rect x="1339" y="153" width="5" height="35" fill="#ff0000"/><rect x="1347" y="221" width="1" height="4" fill="#008000"/><rect x="1345" y="223" width="5" height="1" fill="#008000"/><rect x="1353" y="196" width="1" height="27" fill="#008000"/><rect x="1351" y="196" width="5" height="27" fill="#008000"/><rect x="1359" y="195" width="1" height="11" fill="#008000"/><rect x="1357" y="195" width="5" height="1" fill="#008000"/><rect x="1365" y="195" width="1" height="20" fill="#ff0000"/><rect x="1363" y="195" width="5" height="6" fill="#ff0000"/><rect x="1370" y="177" width="1" height="24" fill="#008000"/><rect x="1368" y="187" width="5" height="14" fill="#008000"/><rect x="1376" y="189" width="1" height="18" fill="#ff0000"/><rect x="1374" y="189" width="5" height="12" fill="#ff0000"/><rect x="1382" y="211" width="1" height="4" fill="#008000"/><rect x="1380" y="213" width="5" height="1" fill="#008000"/><rect x="1388" y="199" width="1" height="14" fill="#008000"/><rect x="1386" y="207" width="5" height="6" fill="#008000"/><rect x="1394" y="207" width="1" height="7" fill="#ff0000"/><rect x="1392" y="207" width="5" height="5" fill="#ff0000"/><rect x="1399" y="200" width="1" height="17" fill="#ff0000"/><rect x="1397" y="200" width="5" height="10" fill="#ff0000"/><rect x="1405" y="198" width="1" height="3" fill="#008000"/><rect x="1403" y="199" width="5" height="2" fill="#008000"/><rect x="1411" y="180" width="1" height="19" fill="#008000"/><rect x="1409" y="187" width="5" height="12" fill="#008000"/><rect x="1417" y="184" width="1" height="15" fill="#ff0000"/><rect x="1415" y="187" width="5" height="6" fill="#ff0000"/><rect x="1423" y="180" width="1" height="16" fill="#ff0000"/><rect x="1421" y="180" width="5" height="14" fill="#ff0000"/><rect x="1429" y="194" width="1" height="4" fill="#ff0000"/><rect x="1427" y="194" width="5" height="1" fill="#ff0000"/><rect x="1434" y="176" width="1" height="21" fill="#ff0000"/><rect x="1432" y="184" width="5" height="10" fill="#ff0000"/><rect x="1440" y="182" width="1" height="14" fill="#ff0000"/><rect x="1438" y="182" width="5" height="8" fill="#ff0000"/><rect x="1446" y="184" width="1" height="15" fill="#ff0000"/><rect x="1444" y="184" width="5" height="8" fill="#ff0000"/><rect x="1452" y="140" width="1" height="32" fill="#008000"/><rect x="1450" y="162" width="5" height="10" fill="#008000"/><rect x="1458" y="162" width="1" height="8" fill="#ff0000"/><rect x="1456" y="162" width="5" height="1" fill="#ff0000"/><rect x="1463" y="153" width="1" height="10" fill="#008000"/><rect x="1461" y="155" width="5" height="8" fill="#008000"/><rect x="1469" y="149" width="1" height="21" fill="#ff0000"/><rect x="1467" y="155" width="5" height="1" fill="#ff0000"/><rect x="1475" y="142" width="1" height="24" fill="#ff0000"/><rect x="1473" y="142" width="5" height="18" fill="#ff0000"/><rect x="1481" y="147" width="1" height="25" fill="#008000"/><rect x="1479" y="147" width="5" height="13" fill="#008000"/><rect x="1487" y="137" width="1" height="5" fill="#ff0000"/><rect x="1485" y="137" width="5" height="5" fill="#ff0000"/><rect x="284" y="414" width="1" height="75" fill="#008000"/><rect x="331" y="485" width="1" height="4" fill="#ff0000"/><rect x="336" y="488" width="1" height="1" fill="#ff0000"/><rect x="342" y="488" width="1" height="1" fill="#ff0000"/><rect x="360" y="483" width="1" height="6" fill="#ff0000"/><rect x="365" y="488" width="1" height="1" fill="#ff0000"/><rect x="371" y="486" width="1" height="3" fill="#ff0000"/><rect x="377" y="488" width="1" height="1" fill="#008000"/><rect x="395" y="485" width="1" height="4" fill="#ff0000"/><rect x="400" y="400" width="1" height="89" fill="#008000"/><rect x="406" y="486" width="1" height="3" fill="#ff0000"/><rect x="412" y="391" width="1" height="98" fill="#008000"/><rect x="424" y="484" width="1" height="5" fill="#ff0000"/><rect x="429" y="484" width="1" height="5" fill="#008000"/><rect x="441" y="487" width="1" height="2" fill="#ff0000"/><rect x="447" y="488" width="1" height="1" fill="#008000"/><rect x="453" y="488" width="1" height="1" fill="#008000"/><rect x="464" y="486" width="1" height="3" fill="#ff0000"/><rect x="482" y="484" width="1" height="5" fill="#008000"/><rect x="493" y="488" width="1" height="1" fill="#ff0000"/><rect x="499" y="482" width="1" height="7" fill="#ff0000"/><rect x="540" y="488" width="1" height="1" fill="#008000"/><rect x="563" y="483" width="1" height="6" fill="#ff0000"/><rect x="575" y="487" width="1" height="2" fill="#ff0000"/><rect x="609" y="486" width="1" height="3" fill="#008000"/><rect x="615" y="488" width="1" height="1" fill="#008000"/><rect x="627" y="485" width="1" height="4" fill="#ff0000"/><rect x="638" y="488" width="1" height="1" fill="#008000"/><rect x="644" y="488" width="1" height="1" fill="#008000"/><rect x="656" y="474" width="1" height="15" fill="#ff0000"/><rect x="673" y="487" width="1" height="2" fill="#ff0000"/><rect x="679" y="486" width="1" height="3" fill="#ff0000"/><rect x="685" y="487" width="1" height="2" fill="#ff0000"/><rect x="702" y="487" width="1" height="2" fill="#008000"/><rect x="714" y="488" width="1" height="1" fill="#ff0000"/><rect x="720" y="488" width="1" height="1" fill="#ff0000"/><rect x="726" y="488" width="1" height="1" fill="#ff0000"/><rect x="731" y="488" width="1" height="1" fill="#008000"/><rect x="743" y="488" width="1" height="1" fill="#ff0000"/><rect x="749" y="488" width="1" height="1" fill="#ff0000"/><rect x="760" y="487" width="1" height="2" fill="#008000"/><rect x="795" y="477" width="1" height="12" fill="#ff0000"/><rect x="801" y="480" width="1" height="9" fill="#ff0000"/><rect x="807" y="476" width="1" height="13" fill="#ff0000"/><rect x="813" y="482" width="1" height="7" fill="#ff0000"/><rect x="819" y="488" width="1" height="1" fill="#008000"/><rect x="830" y="488" width="1" height="1" fill="#008000"/><rect x="853" y="479" width="1" height="10" fill="#008000"/><rect x="859" y="487" width="1" height="2" fill="#ff0000"/><rect x="865" y="487" width="1" height="2" fill="#008000"/><rect x="871" y="486" width="1" height="3" fill="#008000"/><rect x="877" y="488" width="1" height="1" fill="#008000"/><rect x="906" y="487" width="1" height="2" fill="#ff0000"/><rect x="912" y="478" width="1" height="11" fill="#008000"/><rect x="917" y="488" width="1" height="1" fill="#ff0000"/><rect x="923" y="488" width="1" height="1" fill="#008000"/><rect x="941" y="488" width="1" height="1" fill="#008000"/><rect x="946" y="488" width="1" height="1" fill="#008000"/><rect x="958" y="488" width="1" height="1" fill="#008000"/><rect x="964" y="487" width="1" height="2" fill="#ff0000"/><rect x="970" y="488" width="1" height="1" fill="#008000"/><rect x="981" y="488" width="1" height="1" fill="#ff0000"/><rect x="987" y="488" width="1" height="1" fill="#008000"/><rect x="999" y="481" width="1" height="8" fill="#008000"/><rect x="1004" y="484" width="1" height="5" fill="#008000"/><rect x="1010" y="473" width="1" height="16" fill="#008000"/><rect x="1028" y="483" width="1" height="6" fill="#008000"/><rect x="1033" y="487" width="1" height="2" fill="#008000"/><rect x="1039" y="485" width="1" height="4" fill="#008000"/><rect x="1045" y="488" width="1" height="1" fill="#008000"/><rect x="1051" y="483" width="1" height="6" fill="#008000"/><rect x="1057" y="488" width="1" height="1" fill="#ff0000"/><rect x="1080" y="475" width="1" height="14" fill="#008000"/><rect x="1097" y="488" width="1" height="1" fill="#008000"/><rect x="1115" y="483" width="1" height="6" fill="#008000"/><rect x="1150" y="487" width="1" height="2" fill="#ff0000"/><rect x="1155" y="488" width="1" height="1" fill="#008000"/><rect x="1161" y="488" width="1" height="1" fill="#008000"/><rect x="1185" y="486" width="1" height="3" fill="#008000"/><rect x="1196" y="488" width="1" height="1" fill="#008000"/><rect x="1202" y="488" width="1" height="1" fill="#ff0000"/><rect x="1208" y="488" width="1" height="1" fill="#008000"/><rect x="1237" y="488" width="1" height="1" fill="#008000"/><rect x="1254" y="488" width="1" height="1" fill="#ff0000"/><rect x="1266" y="485" width="1" height="4" fill="#008000"/><rect x="1318" y="488" width="1" height="1" fill="#ff0000"/><rect x="1324" y="488" width="1" height="1" fill="#008000"/><rect x="1347" y="487" width="1" height="2" fill="#ff0000"/><rect x="1353" y="452" width="1" height="37" fill="#008000"/><rect x="1359" y="488" width="1" height="1" fill="#008000"/><rect x="1365" y="488" width="1" height="1" fill="#ff0000"/><rect x="1370" y="483" width="1" height="6" fill="#008000"/><rect x="1376" y="488" width="1" height="1" fill="#ff0000"/><rect x="1394" y="487" width="1" height="2" fill="#ff0000"/><rect x="1399" y="488" width="1" height="1" fill="#008000"/><rect x="1417" y="488" width="1" height="1" fill="#ff0000"/><rect x="1434" y="487" width="1" height="2" fill="#008000"/><rect x="1446" y="488" width="1" height="1" fill="#ff0000"/><rect x="1452" y="459" width="1" height="30" fill="#008000"/><rect x="1458" y="486" width="1" height="3" fill="#ff0000"/><rect x="1463" y="486" width="1" height="3" fill="#008000"/><rect x="1481" y="485" width="1" height="4" fill="#008000"/><rect x="75" y="1" width="1" height="489" fill="#008c5a"/><rect x="75" y="489" width="1420" height="2" fill="#008c5a"/><rect x="76" y="471" width="254" height="18" fill="#e3e3e3"/><polyline points="238.5,563.9 243.5,562.4 249.5,560.5 255.5,557.5 261.5,554.9 267.5,552.3 273.5,550.7 278.5,549.1 284.5,546.7 290.5,545.7 296.5,545.8 302.5,545.0 307.5,543.0 313.5,541.7 319.5,541.6 325.5,541.3 331.5,541.3 336.5,542.0 342.5,542.2 348.5,542.3 354.5,541.7 360.5,541.5 365.5,542.2 371.5,542.6 377.5,542.5 383.5,543.9 389.5,548.3 395.5,552.0 400.5,554.0 406.5,555.8 412.5,556.5 418.5,557.3 424.5,558.3 429.5,559.4 435.5,560.4 441.5,560.7 447.5,560.2 453.5,558.7 458.5,557.4 464.5,555.7 470.5,552.3 476.5,549.0 482.5,547.1 487.5,545.1 493.5,544.9 499.5,544.9 505.5,543.4 511.5,541.8 516.5,540.7 522.5,539.8 528.5,539.8 534.5,540.5 540.5,540.4 546.5,539.4 551.5,538.5 557.5,537.1 563.5,537.0 569.5,536.5 575.5,535.2 580.5,533.9 586.5,534.3 592.5,535.7 598.5,536.7 604.5,537.5 609.5,537.8 615.5,538.0 621.5,539.9 627.5,542.4 633.5,544.8 638.5,547.6 644.5,547.8 650.5,549.2 656.5,550.9 662.5,552.5 668.5,553.2 673.5,553.4 679.5,553.7 685.5,554.1 691.5,555.1 697.5,556.1 702.5,555.0 708.5,553.8 714.5,552.5 720.5,551.8 726.5,553.5 731.5,554.6 737.5,555.7 743.5,556.9 749.5,558.6 755.5,559.6 760.5,559.8 766.5,560.0 772.5,560.2 778.5,560.4 784.5,562.4 790.5,564.6 795.5,566.8 801.5,568.4 807.5,568.9 813.5,569.7 819.5,569.6 824.5,569.3 830.5,568.2 836.5,567.7 842.5,568.6 848.5,569.0 853.5,568.1 859.5,567.0 865.5,564.5 871.5,561.5 877.5,557.6 882.5,553.8 888.5,549.7 894.5,544.7 900.5,540.3 906.5,537.3 912.5,534.9 917.5,532.5 923.5,529.2 929.5,526.4 935.5,525.5 941.5,524.5 946.5,524.5 952.5,524.7 958.5,526.5 964.5,528.9 970.5,531.3 975.5,533.6 981.5,536.1 987.5,536.1 993.5,536.9 999.5,537.8 1004.5,538.8 1010.5,539.8 1016.5,539.7 1022.5,539.8 1028.5,540.0 1033.5,539.1 1039.5,536.9 1045.5,533.5 1051.5,530.2 1057.5,528.4 1063.5,527.1 1068.5,526.9 1074.5,525.4 1080.5,523.8 1086.5,522.2 1092.5,520.5 1097.5,519.2 1103.5,517.8 1109.5,516.1 1115.5,515.8 1121.5,517.1 1126.5,520.2 1132.5,522.6 1138.5,523.1 1144.5,521.8 1150.5,520.5 1155.5,519.7 1161.5,519.1 1167.5,519.4 1173.5,520.0 1179.5,520.9 1185.5,521.7 1190.5,523.4 1196.5,524.6 1202.5,525.5 1208.5,525.2 1214.5,526.7 1219.5,529.5 1225.5,532.7 1231.5,535.9 1237.5,538.6 1243.5,541.9 1248.5,543.8 1254.5,545.4 1260.5,545.9 1266.5,545.4 1272.5,544.5 1277.5,543.7 1283.5,541.9 1289.5,540.4 1295.5,537.8 1301.5,534.9 1307.5,533.4 1312.5,532.3 1318.5,532.2 1324.5,531.0 1330.5,530.3 1336.5,529.7 1341.5,530.1 1347.5,533.4 1353.5,535.1 1359.5,536.5 1365.5,538.5 1370.5,540.2 1376.5,542.1 1382.5,544.4 1388.5,546.0 1394.5,547.1 1399.5,547.2 1405.5,547.8 1411.5,548.1 1417.5,548.3 1423.5,548.5 1429.5,545.8 1434.5,545.2 1440.5,544.6 1446.5,543.6 1452.5,542.5 1458.5,540.6 1463.5,537.5 1469.5,534.8 1475.5,532.0 1481.5,529.5 1487.5,527.1" fill="none" stroke="#808000" stroke-width="1"/><polyline points="81.5,548.4 87.5,552.7 92.5,556.8 98.5,550.0 104.5,564.1 110.5,567.8 116.5,566.5 121.5,559.2 127.5,557.1 133.5,557.6 139.5,560.8 145.5,561.2 151.5,561.2 156.5,569.0 162.5,567.8 168.5,569.4 174.5,572.2 180.5,574.3 185.5,575.0 191.5,569.0 197.5,569.0 203.5,573.8 209.5,562.5 214.5,555.2 220.5,555.2 226.5,554.4 232.5,553.5 238.5,543.8 243.5,547.0 249.5,541.4 255.5,530.5 261.5,538.6 267.5,538.1 273.5,546.7 278.5,546.7 284.5,539.8 290.5,548.7 296.5,556.8 302.5,543.8 307.5,526.0 313.5,535.7 319.5,542.2 325.5,543.0 331.5,541.0 336.5,541.0 342.5,541.0 348.5,539.3 354.5,539.3 360.5,543.8 365.5,548.7 371.5,554.8 377.5,555.2 383.5,564.1 389.5,587.6 395.5,587.6 400.5,569.0 406.5,568.1 412.5,551.9 418.5,551.9 424.5,555.5 429.5,553.5 435.5,553.2 441.5,549.0 447.5,541.9 453.5,533.7 458.5,536.5 464.5,540.6 470.5,539.8 476.5,541.9 482.5,542.5 487.5,538.9 493.5,550.3 499.5,550.6 505.5,535.4 511.5,531.6 516.5,536.5 522.5,537.0 528.5,541.4 534.5,543.8 540.5,534.9 546.5,526.8 551.5,527.6 557.5,522.7 563.5,539.8 569.5,533.3 575.5,531.6 580.5,532.1 586.5,541.4 592.5,550.6 598.5,550.6 604.5,548.7 609.5,545.1 615.5,546.2 621.5,561.7 627.5,561.7 633.5,561.7 638.5,561.3 644.5,543.0 650.5,553.5 656.5,554.4 662.5,554.8 668.5,551.1 673.5,553.5 679.5,554.4 685.5,555.2 691.5,559.2 697.5,559.7 702.5,546.2 708.5,544.6 714.5,544.6 720.5,551.6 726.5,566.9 731.5,567.8 737.5,570.6 743.5,570.9 749.5,575.0 755.5,568.1 760.5,557.1 766.5,558.1 772.5,561.3 778.5,563.3 784.5,573.0 790.5,575.5 795.5,575.9 801.5,574.3 807.5,574.3 813.5,577.9 819.5,569.8 824.5,566.9 830.5,559.2 836.5,560.8 842.5,569.8 848.5,564.6 853.5,548.7 859.5,547.4 865.5,537.6 871.5,534.4 877.5,521.1 882.5,520.8 888.5,517.0 894.5,507.8 900.5,507.8 906.5,525.1 912.5,526.3 917.5,526.3 923.5,524.0 929.5,525.1 935.5,536.5 941.5,533.7 946.5,536.5 952.5,538.1 958.5,546.2 964.5,553.5 970.5,551.1 975.5,540.9 981.5,541.9 987.5,525.6 993.5,537.6 999.5,538.1 1004.5,538.9 1010.5,538.9 1016.5,534.9 1022.5,534.9 1028.5,539.3 1033.5,526.3 1039.5,515.4 1045.5,504.9 1051.5,504.9 1057.5,516.2 1063.5,523.5 1068.5,523.5 1074.5,515.9 1080.5,515.9 1086.5,515.9 1092.5,515.9 1097.5,515.9 1103.5,515.9 1109.5,515.9 1115.5,520.8 1121.5,534.9 1126.5,547.9 1132.5,538.1 1138.5,523.5 1144.5,504.9 1150.5,505.2 1155.5,505.7 1161.5,506.5 1167.5,521.1 1173.5,524.0 1179.5,527.9 1185.5,527.9 1190.5,538.6 1196.5,538.1 1202.5,547.1 1208.5,543.8 1214.5,559.2 1219.5,562.5 1225.5,550.3 1231.5,549.5 1237.5,544.6 1243.5,552.7 1248.5,547.1 1254.5,546.2 1260.5,534.9 1266.5,521.4 1272.5,525.1 1277.5,527.9 1283.5,521.9 1289.5,522.7 1295.5,522.7 1301.5,521.9 1307.5,528.9 1312.5,534.1 1318.5,543.8 1324.5,536.0 1330.5,537.0 1336.5,537.3 1341.5,540.6 1347.5,568.1 1353.5,547.9 1359.5,547.9 1365.5,550.0 1370.5,546.2 1376.5,550.3 1382.5,554.0 1388.5,550.3 1394.5,550.0 1399.5,545.1 1405.5,544.6 1411.5,540.9 1417.5,540.9 1423.5,543.0 1429.5,530.5 1434.5,539.8 1440.5,538.6 1446.5,536.5 1452.5,530.8 1458.5,523.5 1463.5,511.0 1469.5,511.7 1475.5,511.7 1481.5,510.1 1487.5,510.1" fill="none" stroke="#000" stroke-width="2" stroke-linejoin="round"/><rect x="75" y="505" width="1" height="92" fill="#000"/><rect x="0" y="0" width="1496" height="1" fill="#000"/><rect x="0" y="0" width="1" height="598" fill="#000"/><rect x="1495" y="0" width="1" height="598" fill="#000"/><rect x="0" y="596" width="1496" height="1" fill="#808080"/><rect x="0" y="597" width="1496" height="1" fill="#000"/><text x="3" y="38" font-size="11" fill="#000" text-anchor="start" >480</text><text x="3" y="67" font-size="11" fill="#000" text-anchor="start" >460</text><text x="3" y="96" font-size="11" fill="#000" text-anchor="start" >440</text><text x="3" y="125" font-size="11" fill="#000" text-anchor="start" >420</text><text x="3" y="154" font-size="11" fill="#000" text-anchor="start" >400</text><text x="3" y="183" font-size="11" fill="#000" text-anchor="start" >380</text><text x="3" y="213" font-size="11" fill="#000" text-anchor="start" >360</text><text x="3" y="242" font-size="11" fill="#000" text-anchor="start" >340</text><text x="3" y="271" font-size="11" fill="#000" text-anchor="start" >320</text><text x="3" y="300" font-size="11" fill="#000" text-anchor="start" >300</text><text x="3" y="329" font-size="11" fill="#000" text-anchor="start" >280</text><text x="3" y="359" font-size="11" fill="#000" text-anchor="start" >260</text><text x="77" y="48" font-size="10" fill="#000" text-anchor="start" textLength="28" lengthAdjust="spacingAndGlyphs">476.95</text><text x="77" y="89" font-size="10" fill="#000" text-anchor="start" textLength="28" lengthAdjust="spacingAndGlyphs">448.84</text><text x="77" y="161" font-size="10" fill="#000" text-anchor="start" textLength="28" lengthAdjust="spacingAndGlyphs">399.66</text><text x="2" y="404.8" font-size="10" fill="#8c9cac" text-anchor="start" textLength="23" lengthAdjust="spacingAndGlyphs">5,233</text><text x="2" y="443.8" font-size="10" fill="#8c9cac" text-anchor="start" textLength="23" lengthAdjust="spacingAndGlyphs">2,616</text><text x="168" y="504" font-size="11" fill="#000" text-anchor="start" >Oct</text><text x="261" y="504" font-size="11" fill="#000" text-anchor="start" >Nov</text><text x="383" y="504" font-size="11" fill="#000" text-anchor="start" >Dec</text><text x="505" y="504" font-size="11" fill="#000" text-anchor="start" >2023</text><text x="638" y="504" font-size="11" fill="#000" text-anchor="start" >Feb</text><text x="755" y="504" font-size="11" fill="#000" text-anchor="start" >Mar</text><text x="877" y="504" font-size="11" fill="#000" text-anchor="start" >Apr</text><text x="964" y="504" font-size="11" fill="#000" text-anchor="start" >May</text><text x="1092" y="504" font-size="11" fill="#000" text-anchor="start" >Jun</text><text x="1214" y="504" font-size="11" fill="#000" text-anchor="start" >Jul</text><text x="1336" y="504" font-size="11" fill="#000" text-anchor="start" >Aug</text><text x="1469" y="504" font-size="11" fill="#000" text-anchor="start" >Sep</text><text x="78.6" y="513" font-size="10" fill="#000" text-anchor="start" textLength="70" lengthAdjust="spacingAndGlyphs" xml:space="preserve">RSI 14/14 = 81.7</text><text x="4" y="527" font-size="9.5" fill="#000" text-anchor="start" >70</text><text x="4" y="546" font-size="9.5" fill="#000" text-anchor="start" >50</text><text x="4" y="567" font-size="9.5" fill="#000" text-anchor="start" >30</text><text x="80.3" y="486" font-size="16.5" fill="#000" text-anchor="start" textLength="112" lengthAdjust="spacingAndGlyphs">Bursagraph.co.il</text><rect x="198" y="474" width="1" height="15" fill="#000"/><text x="205.7" y="486" font-size="16.5" fill="#000" text-anchor="start" textLength="59.5" lengthAdjust="spacingAndGlyphs">1090117</text><rect x="271" y="474" width="1" height="15" fill="#000"/><text x="277.8" y="486" font-size="15.5" fill="#000" text-anchor="start" textLength="50.5" lengthAdjust="spacingAndGlyphs">ספאנטק</text></svg></body></html>
